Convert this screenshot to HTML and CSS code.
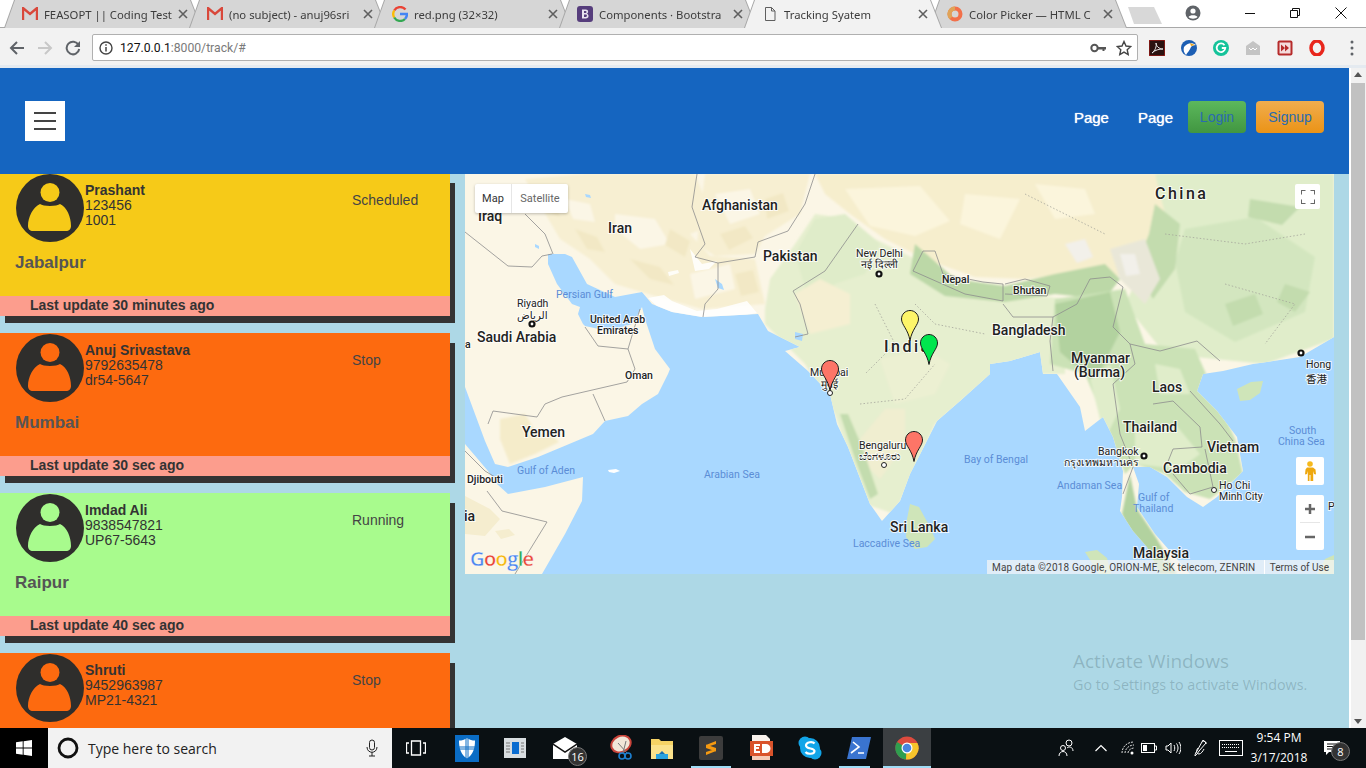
FILE: index.html
```html
<!DOCTYPE html>
<html lang="en">
<head>
    <meta charset="UTF-8">
    <meta name="viewport" content="width=device-width, initial-scale=1.0">
    <title>Tracking Syatem</title>
    <link rel="stylesheet" href="styles.css">
</head>
<body>
    <svg class="defs" width="0" height="0">
        <symbol id="person" viewBox="0 0 68 68">
            <circle cx="34" cy="34" r="34" fill="#2f2e2c"/>
            <circle cx="34" cy="18.5" r="9.5" class="cut"/>
            <path class="cut" d="M24 30c3 2.500 17 2.500 20 0 7 3 11 13 11 22 0 3-2 5-5 5H17c-3 0-5-2-5-5 0-9 5-19 12-22z"/>
        </symbol>
        <symbol id="pin" viewBox="0 0 18 31">
            <path stroke="#1c1c1c" stroke-width="1" d="M9 .5C4.300.5.500 4.300.500 9c0 6 6.500 10 8.500 21.500C11 19 17.500 15 17.500 9 17.500 4.300 13.700.500 9 .500z"/>
        </symbol>
        <symbol id="close" viewBox="0 0 10 10">
            <path d="M1 1l8 8M9 1l-8 8" stroke="#5f5f5f" stroke-width="1.600"/>
        </symbol>
        <symbol id="gmail" viewBox="0 0 16 14">
            <path d="M1 13V1l7 6 7-6v12" fill="none" stroke="#d9483b" stroke-width="2.400"/>
        </symbol>
    </svg>

    <!-- browser window -->
    <div class="tabstrip">
        <div class="tab">
            <svg class="fav" width="16" height="14"><use href="#gmail"/></svg>
            <span class="tab-title">FEASOPT || Coding Test</span>
            <svg class="tab-x" width="10" height="10"><use href="#close"/></svg>
        </div>
        <div class="tab">
            <svg class="fav" width="16" height="14"><use href="#gmail"/></svg>
            <span class="tab-title">(no subject) - anuj96sri</span>
            <svg class="tab-x" width="10" height="10"><use href="#close"/></svg>
        </div>
        <div class="tab">
            <svg class="fav" width="16" height="16" viewBox="0 0 16 16">
                <path d="M13.500 3.500A7 7 0 0 0 2.200 4.500" fill="none" stroke="#ea4335" stroke-width="2.400"/>
                <path d="M2.200 4.500a7 7 0 0 0 0 7" fill="none" stroke="#fbbc05" stroke-width="2.400"/>
                <path d="M2.200 11.500a7 7 0 0 0 10.800 1.500" fill="none" stroke="#34a853" stroke-width="2.400"/>
                <path d="M13 13a7 7 0 0 0 2-5H8" fill="none" stroke="#4285f4" stroke-width="2.400"/>
            </svg>
            <span class="tab-title">red.png (32×32)</span>
            <svg class="tab-x" width="10" height="10"><use href="#close"/></svg>
        </div>
        <div class="tab">
            <svg class="fav" width="16" height="16" viewBox="0 0 16 16">
                <rect width="16" height="16" rx="3" fill="#563d7c"/>
                <path d="M5 3.500h3.800c3 0 3 3.700.8 4.200 2.800.4 2.600 4.800-.8 4.800H5zM7 5.100v2h1.500c1.400 0 1.400-2 0-2zM7 8.600v2.300h1.800c1.600 0 1.600-2.300 0-2.300z" fill="#e9e4f0" fill-rule="evenodd"/>
            </svg>
            <span class="tab-title">Components · Bootstra</span>
            <svg class="tab-x" width="10" height="10"><use href="#close"/></svg>
        </div>
        <div class="tab tab-active">
            <svg class="fav" width="16" height="16" viewBox="0 0 16 16">
                <path d="M3.500 1.500h6l3.500 3.500v9.500h-9.500zM9.500 1.500v3.500H13" fill="none" stroke="#5f5f5f"/>
            </svg>
            <span class="tab-title">Tracking Syatem</span>
            <svg class="tab-x" width="10" height="10"><use href="#close"/></svg>
        </div>
        <div class="tab">
            <svg class="fav" width="16" height="16" viewBox="0 0 16 16">
                <circle cx="8" cy="8" r="5.500" fill="none" stroke="#f2704a" stroke-width="4"/>
                <path d="M8 2.500a5.500 5.500 0 0 0-4 9.300" fill="none" stroke="#e0a458" stroke-width="4"/>
            </svg>
            <span class="tab-title">Color Picker — HTML C</span>
            <svg class="tab-x" width="10" height="10"><use href="#close"/></svg>
        </div>
        <div class="newtab"></div>
        <div class="winbtns">
            <svg width="16" height="16" viewBox="0 0 16 16" class="profile">
                <circle cx="8" cy="8" r="7.500" fill="#5f6368"/>
                <circle cx="8" cy="6" r="2.600" fill="#fff"/>
                <path d="M3.500 12c1-2.300 8-2.300 9 0-2 2.300-7 2.300-9 0z" fill="#fff"/>
            </svg>
            <svg width="12" height="12" viewBox="0 0 12 12" class="minimize"><path d="M1 6.500h10" stroke="#111"/></svg>
            <svg width="12" height="12" viewBox="0 0 12 12" class="restore"><path d="M1.500 3.500h7v7h-7zM3.500 3.500v-2h7v7h-2" fill="none" stroke="#111"/></svg>
            <svg width="14" height="14" viewBox="0 0 14 14" class="winclose"><path d="M1.500 1.500l11 11M12.500 1.500l-11 11" stroke="#111"/></svg>
        </div>
    </div>

    <div class="toolbar">
        <svg class="tool-back" width="16" height="16" viewBox="0 0 16 16"><path d="M15 8H2.500M8 2L2 8l6 6" fill="none" stroke="#5f6368" stroke-width="2"/></svg>
        <svg class="tool-fwd" width="16" height="16" viewBox="0 0 16 16"><path d="M1 8h12.500M8 2l6 6-6 6" fill="none" stroke="#c8c8c8" stroke-width="2"/></svg>
        <svg class="tool-reload" width="16" height="16" viewBox="0 0 16 16"><path d="M13.500 5A6.300 6.300 0 1 0 14.200 9" fill="none" stroke="#5f6368" stroke-width="2"/><path d="M15 1v6H9z" fill="#5f6368"/></svg>
        <div class="omnibox">
            <svg width="14" height="14" viewBox="0 0 14 14"><circle cx="7" cy="7" r="6" fill="none" stroke="#444" stroke-width="1.400"/><path d="M7 6v4.500M7 3.200v1.500" stroke="#444" stroke-width="1.500"/></svg>
            <span class="url"><b>127.0.0.1</b>:8000/track/#</span>
            <svg class="omni-key" width="16" height="10" viewBox="0 0 16 10"><circle cx="4.500" cy="5" r="3.200" fill="none" stroke="#555" stroke-width="2"/><path d="M7 4h9v2.500h-1.500V8h-2V6.500H7z" fill="#555"/></svg>
            <svg class="omni-star" width="16" height="16" viewBox="0 0 16 16"><path d="M8 1.500l2 4.500 4.800.500-3.600 3.200 1 4.800L8 12.100l-4.200 2.400 1-4.800L1.200 6.500 6 6z" fill="none" stroke="#444" stroke-width="1.400"/></svg>
        </div>
        <div class="exts">
            <svg width="16" height="16" viewBox="0 0 16 16"><rect width="16" height="16" fill="#2a1210" stroke="#c8201a"/><path d="M3 13c3-2 5-7 4-10 0 3 3 6 7 6-4 0-8 1-11 4z" fill="none" stroke="#e8e8e8"/></svg>
            <svg width="16" height="16" viewBox="0 0 16 16"><circle cx="8" cy="8" r="8" fill="#1d5fb4"/><path d="M3 7c3-4 8-5 12-2-3 0-4 1-5 2-1 3-4 6-5 8-2-2-3-5-2-8z" fill="#fff"/><path d="M9 3l5 2-4 1z" fill="#e8a21c"/></svg>
            <svg width="16" height="16" viewBox="0 0 16 16"><circle cx="8" cy="8" r="8" fill="#15c39a"/><path d="M11.500 5.200A4.300 4.300 0 1 0 12.300 8H8.800" fill="none" stroke="#fff" stroke-width="1.800"/></svg>
            <svg width="16" height="16" viewBox="0 0 16 16"><path d="M1 6l7-5 7 5v9H1z" fill="#c4c4c4"/><path d="M4 8l2 2 2-2 2 2 2-2" fill="none" stroke="#fff"/></svg>
            <svg width="16" height="16" viewBox="0 0 16 16"><rect x=".5" y=".5" width="15" height="15" rx="2" fill="#b62b2b"/><rect x="2.500" y="2.500" width="11" height="11" fill="#f4dcdc"/><path d="M4 4.500l4 3.500-4 3.500zM8 4.500l4 3.500-4 3.500z" fill="#b62b2b"/></svg>
            <svg width="16" height="16" viewBox="0 0 16 16"><ellipse cx="8" cy="8" rx="6" ry="7" fill="none" stroke="#e8261c" stroke-width="3.500"/></svg>
            <svg class="menu-dots" width="4" height="16" viewBox="0 0 4 16"><circle cx="2" cy="2" r="1.500" fill="#5f6368"/><circle cx="2" cy="8" r="1.500" fill="#5f6368"/><circle cx="2" cy="14" r="1.500" fill="#5f6368"/></svg>
        </div>
    </div>

    <!-- the page itself -->
    <div class="viewport">
        <div class="page">
            <nav class="navbar">
                <button class="burger"><span></span><span></span><span></span></button>
                <div class="nav-right">
                    <a class="nav-link" href="#">Page</a>
                    <a class="nav-link" href="#">Page</a>
                    <a class="btn btn-login" href="#">Login</a>
                    <a class="btn btn-signup" href="#">Signup</a>
                </div>
            </nav>

            <div class="main">
                <div class="sidebar">
                    <div class="card card-yellow">
                        <div class="card-body">
                            <svg class="avatar" width="68" height="68"><use href="#person"/></svg>
                            <div class="info"><b>Prashant</b><br>123456<br>1001</div>
                            <div class="status">Scheduled</div>
                            <div class="city">Jabalpur</div>
                        </div>
                        <div class="card-foot">Last update 30 minutes ago</div>
                    </div>
                    <div class="card card-orange">
                        <div class="card-body">
                            <svg class="avatar" width="68" height="68"><use href="#person"/></svg>
                            <div class="info"><b>Anuj Srivastava</b><br>9792635478<br>dr54-5647</div>
                            <div class="status">Stop</div>
                            <div class="city">Mumbai</div>
                        </div>
                        <div class="card-foot">Last update 30 sec ago</div>
                    </div>
                    <div class="card card-green">
                        <div class="card-body">
                            <svg class="avatar" width="68" height="68"><use href="#person"/></svg>
                            <div class="info"><b>Imdad Ali</b><br>9838547821<br>UP67-5643</div>
                            <div class="status">Running</div>
                            <div class="city">Raipur</div>
                        </div>
                        <div class="card-foot">Last update 40 sec ago</div>
                    </div>
                    <div class="card card-orange">
                        <div class="card-body">
                            <svg class="avatar" width="68" height="68"><use href="#person"/></svg>
                            <div class="info"><b>Shruti</b><br>9452963987<br>MP21-4321</div>
                            <div class="status">Stop</div>
                        </div>
                    </div>
                </div>

                <div class="map">
                    <svg class="map-svg" width="869" height="400" viewBox="0 0 869 400">
                        <defs>
                            <clipPath id="land"><path id="landshape" d="M869 163L835 183 788 190 758 197 738 200 732 217 752 237 772 263 778 297 752 323 738 333 722 323 702 303 685 293 668 293 674 310 672 333 690 360 712 385 725 400 695 400 682 373 668 357 655 337 657 323 658 297 648 263 638 243 620 257 615 233 592 200 578 200 575 178 545 187 525 190 525 200 495 227 472 247 445 300 435 327 417 347 405 330 383 273 372 250 365 220 343 197 320 177 335 173 303 157 293 140 237 143 207 138 187 130 177 118 150 123 122 110 107 83 100 80 83 80 83 90 92 110 107 130 115 133 113 140 118 150 120 152 143 157 167 150 177 133 180 145 190 175 205 195 203 200 193 220 177 230 163 242 140 247 128 260 97 273 73 283 43 293 30 290 20 267 0 213 0 0 869 0z"/></clipPath>
                            <filter id="soft"><feGaussianBlur stdDeviation=".8"/></filter>
                        </defs>
                        <rect width="869" height="400" fill="#a9d8ff"/>
                        <!-- horn of africa, islands -->
                        <path fill="#fbf6e6" d="M0 270L23 297 32 310 43 320 80 313 118 303 117 327 100 360 77 400 0 400z"/>
                        <path fill="#f5edcf" d="M0 322L25 335 35 345 20 362 0 360z"/>
                        <path fill="#f5edcf" d="M30 357l14-2 6 6-14 4z"/>
                        <path fill="#fff" d="M143 296l8-1 4 2-6 2-5-1z"/>
                        <path fill="#cfe5b9" d="M445 330l9 3 11 20 5 12-8 8-12 2-9-12 1-18z"/>
                        <path fill="#cfe5b9" d="M772 215l14-7 12-1-3 12-10 7-10 1z"/>
                        <path fill="#cfe5b9" d="M620 378l12-2 10 8 4 16h-12zM852 400l8-15 9-4v19z"/>

                        <g clip-path="url(#land)">
                            <rect width="869" height="400" fill="#fbf6e6"/>
                            <g filter="url(#soft)">
                                <path fill="#f7efd2" d="M60 5L120 0 230 0 250 50 225 60 245 82 290 85 300 130 237 135 190 122 150 110 125 85 95 65z"/>
                                <path fill="#f7efd2" d="M240 0L345 0 335 40 300 62 290 80 250 82 232 70 235 40z"/>
                                <path fill="#fbf6e6" d="M150 40l40 5 15 25-30 5-25-20zM250 20l35-5 10 25-30 10zM225 100l40-10 5 25-40 10zM100 25l25 5 5 18-22-3z"/>
                                <path fill="#f2e8c5" d="M110 55l22 8 8 15-18-3zM165 85l30 8 14 18-24-6zM205 55l20 12-5 16-20-12zM255 60l25-8 8 12-24 12zM270 100l18-4 6 22-18 4zM300 25l18-6 6 18-22 8zM75 20l15 5 5 18-14-6z"/>
                                <path fill="#e6efcf" d="M300 135L305 105 330 70 350 40 385 45 410 65 460 90 520 115 560 120 600 125 600 200 530 200 470 250 430 340 400 330 370 240 340 190 300 150z"/>
                                <path fill="#dfecc9" d="M330 80L350 45 380 40 415 70 400 100 370 110 345 130z"/>
                                <path fill="#f5efd2" d="M330 120L355 105 385 120 385 150 345 160z"/>
                                <path fill="#f0eed0" d="M395 265l25-30 20 0 0 35-25 35-10-10z"/>
                                <path fill="#c3dcae" d="M375 240l8 0 15 35 15 45-8 5-15-40z"/>
                                <path fill="#ecf0d2" d="M415 185l45-10 25 15-15 30-40 10z"/>
                                <path fill="#f6eecd" d="M350 0L690 0 700 35 680 90 640 108 600 100 560 105 510 103 460 85 420 65 385 40 360 20z"/>
                                <path fill="#fbf5dc" d="M380 15l75-3 30 35-35 15-45-10zM500 20l55 5-20 40-40-15zM570 10l50 5 10 25-40 5z"/>
                                <path fill="#e0edca" d="M690 0L869 0 869 165 800 190 700 180 660 130 680 90 700 40z"/>
                                <path fill="#d3e6bf" d="M720 55l70-12 60 40-10 55-70 30-50-30-10-50z"/>
                                <path fill="#c3dcae" d="M690 30l25 20-5 45-22 30-18-30 14-35zM785 25l50 8-18 18-34-8zM760 130l30-10 8 20-30 12zM820 110l25 8-15 20-18-10z"/>
                                <path fill="#e9e7d8" d="M645 75l35-10 15 40-15 25-25-25z"/>
                                <path fill="#f2f0ea" d="M600 70l20-5 8 18-16 6zM655 80l15 0 5 20-14 2z"/>
                                <path fill="#bcd8a7" d="M450 70L490 105 540 112 590 100 640 90 655 105 640 125 590 120 540 128 480 122 445 100z"/>
                                <path fill="#cbe2b6" d="M590 125L660 115 680 170 730 175 770 265 778 300 745 325 720 318 700 300 670 290 660 300 645 260 620 200 585 190z"/>
                                <path fill="#b2d29f" d="M590 130l55-12 10 40-25 50-35-30z"/>
                                <path fill="#e0edca" d="M625 205l20-15 10 45-15 30zM670 255l40-5 25 30-20 15-45-5zM690 190l25 5 10 25-30 0z"/>
                                <path fill="#b2d29f" d="M665 300l7 35 20 30 20 35-30 0-25-60z"/>
                                <path fill="#f5ecca" d="M35 245l25-5 12 20 14 0 8 8-24 12-25 10-10-25z"/>
                            </g>
                            <path fill="#fff" opacity=".85" d="M183 124l16-3 8 6 25 10 20-2 30-8 10 12-30 6-35 0-30-8zM225 75l12 15 15-3-8 8-14 2zM203 98l10-2 1 3-10 3z"/>
                            <path fill="#a9d8ff" d="M250 105l7 5 2 6-6-2zM330 158l8 2-1 7-7-2zM120 20l5 1 1 3-5-1zM70 70l4 2 0 3-4-2z"/>
                        </g>

                        <g class="borders" fill="none">
                            <path d="M0 58L43 92 67 93 77 82 87 80M60 40L80 60 88 80"/>
                            <path d="M232 0L227 33 240 70 230 83 253 89 253 115 240 130 238 143"/>
                            <path d="M253 89L290 83 293 68 323 57 340 30 350 0"/>
                            <path d="M393 50L360 97 328 117 335 130 343 160 330 163"/>
                            <path d="M120 153L133 172 163 175 175 135M163 175L170 195 162 208 97 223 80 230 72 243 28 237 23 250M128 220L140 247"/>
                            <path d="M22 317L37 337 82 348 50 400M0 277L20 297 30 303"/>
                            <path d="M448 97L458 77 470 77 478 100 518 108 538 110 538 127 500 120 448 97"/>
                            <path d="M540 120L582 122 585 112 560 105 540 110"/>
                            <path d="M538 130L548 143 588 143 585 167 588 197M588 143L612 130 625 105 645 103 658 113 648 153 665 170 695 177 732 167 755 187"/>
                            <path d="M665 170L670 190 648 210 655 260 668 293 658 320"/>
                            <path d="M688 230L708 227 735 253 737 273 708 275 702 290M725 217L755 250 768 267M708 300L725 320 748 313 740 275"/>
                            <path class="dash" d="M450 130L470 150 520 160M395 230L440 225 470 190M410 130L430 170 400 200M700 60L780 70 840 60M760 110L830 130 800 170M560 20L640 60"/>
                        </g>

                        <g class="lbl-sea">
                            <text x="91" y="124">Persian Gulf</text>
                            <text x="52" y="300">Gulf of Aden</text>
                            <text x="239" y="304">Arabian Sea</text>
                            <text x="499" y="289">Bay of Bengal</text>
                            <text x="388" y="373">Laccadive Sea</text>
                            <text x="592" y="315">Andaman Sea</text>
                            <text x="673" y="327">Gulf of</text>
                            <text x="668" y="338">Thailand</text>
                            <text x="824" y="260">South</text>
                            <text x="813" y="271">China Sea</text>
                        </g>
                        <g class="lbl-big">
                            <text x="13" y="47">Iraq</text>
                            <text x="143" y="59">Iran</text>
                            <text x="237" y="36">Afghanistan</text>
                            <text x="298" y="87">Pakistan</text>
                            <text x="12" y="168">Saudi Arabia</text>
                            <text x="57" y="263">Yemen</text>
                            <text x="-1" y="347">ia</text>
                            <text x="425" y="358">Sri Lanka</text>
                            <text x="527" y="161">Bangladesh</text>
                            <text x="606" y="189">Myanmar</text>
                            <text x="609" y="203">(Burma)</text>
                            <text x="687" y="218">Laos</text>
                            <text x="658" y="258">Thailand</text>
                            <text x="742" y="278">Vietnam</text>
                            <text x="698" y="299">Cambodia</text>
                            <text x="668" y="384">Malaysia</text>
                        </g>
                        <text class="lbl-wide" x="419" y="178">India</text>
                        <text class="lbl-wide" x="690" y="25">China</text>
                        <g class="lbl-mid">
                            <text x="125" y="149">United Arab</text>
                            <text x="132" y="160">Emirates</text>
                            <text x="160" y="205">Oman</text>
                            <text x="2" y="309">Djibouti</text>
                            <text x="477" y="109">Nepal</text>
                            <text x="548" y="120">Bhutan</text>
                            <text x="0" y="174">a</text>
                        </g>
                        <g class="lbl-city">
                            <text x="391" y="83">New Delhi</text>
                            <text x="396" y="94">नई दिल्ली</text>
                            <text x="52" y="133">Riyadh</text>
                            <text x="52" y="145">الرياض</text>
                            <text x="345" y="202">Mumbai</text>
                            <text x="356" y="214">मुंबई</text>
                            <text x="394" y="275">Bengaluru</text>
                            <text x="394" y="286">ಬೆಂಗಳೂರು</text>
                            <text x="633" y="281">Bangkok</text>
                            <text x="599" y="292">กรุงเทพมหานคร</text>
                            <text x="754" y="315">Ho Chi</text>
                            <text x="754" y="326">Minh City</text>
                            <text x="841" y="194">Hong</text>
                            <text x="841" y="209">香港</text>
                            <text x="863" y="336">P</text>
                        </g>
                        <g class="dots">
                            <circle cx="414" cy="100" r="2.500"/><circle cx="67" cy="150" r="2.500"/>
                            <circle cx="836" cy="179" r="2.500"/><circle cx="679" cy="282" r="2.500"/>
                        </g>
                        <g class="rings">
                            <circle cx="365" cy="219" r="2.500"/><circle cx="419" cy="291" r="2.500"/><circle cx="749" cy="316" r="2.500"/>
                        </g>

                        <use href="#pin" x="436" y="136" width="18" height="31" fill="#fdf569"/>
                        <use href="#pin" x="455" y="160" width="18" height="31" fill="#00e64d"/>
                        <use href="#pin" x="356" y="186" width="18" height="31" fill="#fd7567"/>
                        <use href="#pin" x="440" y="257" width="18" height="31" fill="#fd7567"/>
                    </svg>

                    <div class="map-type"><span class="map-on">Map</span><span class="map-off">Satellite</span></div>
                    <div class="map-ctl map-full">
                        <svg width="14" height="14" viewBox="0 0 14 14"><path d="M0 4.500V0h4.500M9.500 0H14v4.500M14 9.500V14H9.500M4.500 14H0V9.500" fill="none" stroke="#666" stroke-width="2"/></svg>
                    </div>
                    <div class="map-ctl map-peg">
                        <svg width="12" height="20" viewBox="0 0 12 20"><circle cx="6" cy="3" r="2.800" fill="#f6b91c"/><path d="M3 6.500h6l2.500 2 .5 5-2-.5-.8-3V20H6.500v-6h-1v6H3.800V10l-.8 3-2 .5.500-5z" fill="#eea80f"/></svg>
                    </div>
                    <div class="map-zoom">
                        <div class="zoom-btn"><svg width="12" height="12" viewBox="0 0 12 12"><path d="M6 1v10M1 6h10" stroke="#666" stroke-width="2.500"/></svg></div>
                        <div class="zoom-sep"></div>
                        <div class="zoom-btn"><svg width="12" height="12" viewBox="0 0 12 12"><path d="M1 6h10" stroke="#666" stroke-width="2.500"/></svg></div>
                    </div>
                    <div class="google"><span class="g-b">G</span><span class="g-r">o</span><span class="g-y">o</span><span class="g-b">g</span><span class="g-g">l</span><span class="g-r">e</span></div>
                    <div class="attrib"><span class="attrib-text">Map data ©2018 Google, ORION-ME, SK telecom, ZENRIN</span><span class="terms">Terms of Use</span></div>
                </div>
            </div>
            <div class="activate">
                <div class="act-a">Activate Windows</div>
                <div class="act-b">Go to Settings to activate Windows.</div>
            </div>
        </div>
        <div class="scrollbar">
            <span class="arrow-up"></span>
            <div class="thumb"></div>
            <span class="arrow-down"></span>
        </div>
    </div>

    <!-- windows taskbar -->
    <div class="taskbar">
        <div class="start">
            <svg width="16" height="16" viewBox="0 0 16 16"><path d="M0 2.300l6.700-1v6.300H0zM7.600 1.200L16 0v7.600H7.600zM0 8.400h6.700v6.300L0 13.700zM7.600 8.400H16V16l-8.400-1.200z" fill="#fff"/></svg>
        </div>
        <div class="search">
            <svg width="22" height="22" viewBox="0 0 22 22"><circle cx="11" cy="11" r="9" fill="none" stroke="#111" stroke-width="2.800"/></svg>
            <span class="search-text">Type here to search</span>
            <svg class="mic" width="12" height="18" viewBox="0 0 12 18"><rect x="3.500" y="1" width="5" height="10" rx="2.500" fill="none" stroke="#222"/><path d="M1 8c0 7 10 7 10 0M6 13v4M3 17h6" fill="none" stroke="#222"/></svg>
        </div>
        <div class="taskview">
            <svg width="20" height="16" viewBox="0 0 20 16"><path d="M5.500 1h9v14h-9zM3 3H.500v10H3M17 3h2.500v10H17" fill="none" stroke="#fff" stroke-width="1.300"/></svg>
        </div>
        <div class="task-icons">
            <div class="slot">
                <svg width="24" height="27" viewBox="0 0 24 27"><rect width="24" height="27" fill="#0a6cc4"/><path d="M12 3c3 2 5 2.500 8 2.500 0 8-2 14-8 18-6-4-8-10-8-18 3 0 5-.5 8-2.500z" fill="#fff"/><path d="M11 3v21M13 3v21M4 12h16M4 14h16" stroke="#0a6cc4"/></svg>
            </div>
            <div class="slot">
                <svg width="22" height="20" viewBox="0 0 22 20"><rect width="22" height="20" fill="#d8dde0"/><rect x="8" y="4" width="7" height="12" fill="#0a6cd0"/><path d="M2 5h4M2 8h4M2 11h4M2 14h4M17 5h3M17 8h3M17 11h3M17 14h3" stroke="#777"/></svg>
            </div>
            <div class="slot slot-mail">
                <svg width="24" height="22" viewBox="0 0 24 22"><path d="M0 7L12 0l12 7v15H0z" fill="#fff"/><path d="M0 7l12 8 12-8" fill="none" stroke="#111" stroke-width="1.500"/></svg>
                <span class="bubble">16</span>
            </div>
            <div class="slot slot-snip">
                <svg width="24" height="26" viewBox="0 0 24 26"><ellipse cx="11" cy="9" rx="10" ry="8" fill="#f1e6d8" stroke="#c9443a" stroke-width="2" transform="rotate(-25 11 9)"/><path d="M8 8l9 10M16 6l-3 12" stroke="#777"/><circle cx="18" cy="21" r="3" fill="none" stroke="#1c7fd0" stroke-width="1.600"/><circle cx="12" cy="21" r="3" fill="none" stroke="#1c7fd0" stroke-width="1.600"/></svg>
            </div>
            <div class="slot slot-folder">
                <svg width="22" height="22" viewBox="0 0 22 22"><path d="M0 2h8l2 2h12v18H0z" fill="#f6d365"/><path d="M0 8h22v14H0z" fill="#fbe28c"/><path d="M5 17h12v5H5z" fill="#2aa3e0"/><path d="M8 17l3-3 3 3z" fill="#1a6fb0"/></svg>
            </div>
            <div class="slot slot-on slot-subl">
                <svg width="24" height="24" viewBox="0 0 24 24"><rect width="24" height="24" rx="2" fill="#3c3c3c"/><path d="M17 5L7 9v3l10 3.500V12L11 10l6-2zM7 19l10-4v-3L7 8.500V12l6 2-6 2z" fill="#f59a11"/></svg>
            </div>
            <div class="slot slot-ppt">
                <svg width="24" height="26" viewBox="0 0 24 26"><path d="M2 0h14l4 4v8H2z" fill="#f7f1ec"/><rect x="0" y="6" width="23" height="15" fill="#d9532b"/><path d="M4 9h6v2H6v1h3v2H6v2h4v2H4zM12 9h4a4 4 0 0 1 0 9h-4z" fill="#fff"/><path d="M2 21h18v4H2z" fill="#f5c9b5"/></svg>
            </div>
            <div class="slot">
                <svg width="24" height="24" viewBox="0 0 24 24"><circle cx="7" cy="7" r="6.500" fill="#12a5e8"/><circle cx="17" cy="17" r="6.500" fill="#12a5e8"/><circle cx="12" cy="12" r="10" fill="#12a5e8"/><path d="M16.500 7.500C15 5.500 8 5.500 8 9.500c0 4 8.500 2 8.500 5.500 0 3.500-7 3.500-9 1" fill="none" stroke="#fff" stroke-width="2.200"/></svg>
            </div>
            <div class="slot slot-on slot-ps">
                <svg width="24" height="22" viewBox="0 0 24 22"><path d="M5 0h19l-5 22H0z" fill="#3a74d0"/><path d="M6 5l6 5-8 6M11 16h6" fill="none" stroke="#fff" stroke-width="1.600"/></svg>
            </div>
            <div class="slot slot-chrome">
                <svg width="24" height="24" viewBox="0 0 24 24"><circle cx="12" cy="12" r="11.500" fill="#dd4b3e"/><path d="M12 12L2 6a11.500 11.500 0 0 0 9 17.500z" fill="#2f9e4f"/><path d="M12 7h10.400a11.500 11.500 0 0 1-11.400 16.500z" fill="#f7c52b"/><circle cx="12" cy="12" r="5.500" fill="#fff"/><circle cx="12" cy="12" r="4.300" fill="#4a86e0"/></svg>
            </div>
        </div>
        <div class="tray">
            <svg class="tray-people" width="16" height="18" viewBox="0 0 16 18"><circle cx="11" cy="4" r="3" fill="none" stroke="#fff"/><circle cx="5" cy="9" r="2.500" fill="none" stroke="#fff"/><path d="M1 17c0-6 8-6 8 0M9 9c2-2 6-1 6 3" fill="none" stroke="#fff"/></svg>
            <svg class="tray-caret" width="12" height="8" viewBox="0 0 12 8"><path d="M.5 7L6 1.500 11.500 7" fill="none" stroke="#fff" stroke-width="1.200"/></svg>
            <svg class="tray-wifi" width="14" height="14" viewBox="0 0 14 14"><path d="M1 12C1 6 6 1 13 1M4 12c0-4 4-8 9-8M7 12c0-2.500 3-5 6-5" fill="none" stroke="#ddd" stroke-dasharray="2 1"/><circle cx="11" cy="12" r="1.500" fill="#fff"/></svg>
            <svg class="tray-batt" width="16" height="10" viewBox="0 0 16 10"><rect x=".5" y=".5" width="13" height="9" fill="none" stroke="#fff"/><rect x="2" y="2" width="4" height="6" fill="#fff"/><path d="M14 3h1.500v4H14" stroke="#fff" fill="none"/></svg>
            <svg class="tray-vol" width="16" height="14" viewBox="0 0 16 14"><path d="M1 5h2l3-3v10L3 9H1z" fill="none" stroke="#fff"/><path d="M9 4c1 2 1 4 0 6M11.500 2.500c2 3 2 6 0 9M14 1c2.500 4 2.500 8 0 12" fill="none" stroke="#fff"/></svg>
            <svg class="tray-pen" width="14" height="18" viewBox="0 0 14 18"><path d="M9 1l3 3-7 8c-1 2-3 4-4 5 0-2 1-4 2-5zM8 3c2-2 5 0 4 2M4 9c-2 2-2 6 1 6 2 0 4-3 5-5" fill="none" stroke="#fff"/></svg>
            <svg class="tray-kbd" width="24" height="16" viewBox="0 0 24 16"><rect x=".5" y=".5" width="23" height="15" fill="none" stroke="#fff"/><path d="M3 4.500h18M3 7.500h18" stroke="#fff" stroke-dasharray="1 1"/><path d="M6 11.500h12" stroke="#fff"/></svg>
            <div class="clock"><div>9:54 PM</div><div>3/17/2018</div></div>
            <div class="notif">
                <svg width="16" height="14" viewBox="0 0 16 14"><path d="M0 0h16v11H5l-3 3v-3H0z" fill="#fff"/><path d="M3 3h10M3 5.500h10M3 8h7" stroke="#111"/></svg>
                <span class="bubble bubble-n">8</span>
            </div>
        </div>
    </div>
</body>
</html>
```

FILE: styles.css
```css
* {
    box-sizing: border-box;
}
html, body {
    margin: 0;
    height: 768px;
    overflow: hidden;
}
body {
    display: flex;
    flex-direction: column;
    font-family: "Liberation Sans", Arial, sans-serif;
    font-size: 14px;
    background: #add8e6;
}
.defs {
    position: absolute;
}
.cut {
    fill: var(--card);
}

/* chrome */
.tabstrip {
    display: flex;
    height: 28px;
    padding-left: 5px;
    background: #fff;
    font-family: "Noto Sans", sans-serif;
    font-size: 11.3px;
    color: #3c3c3c;
    flex-shrink: 0;
    box-shadow: inset 0 -1px 0 #a8a8a8;
}
.tab {
    position: relative;
    display: flex;
    align-items: center;
    width: 196px;
    height: 28px;
    margin-right: -11px;
    padding: 0 13px 0 17px;
    filter: drop-shadow(1px 0 0 #a6a6a6) drop-shadow(-1px 0 0 #a6a6a6);
}
.tab::before {
    content: "";
    position: absolute;
    inset: 0;
    background: #d6d6d6;
    clip-path: polygon(0 100%, 10px 0, 185px 0, 100% 100%);
}
.tab > * {
    position: relative;
}
.tab-active {
    z-index: 2;
}
.tab-active::before {
    background: #f2f2f2;
}
.fav {
    flex-shrink: 0;
    margin-right: 6px;
}
.tab-title {
    flex: 1;
    overflow: hidden;
    white-space: nowrap;
    margin-right: 6px;
}
.tab-x {
    flex-shrink: 0;
}
.newtab {
    width: 34px;
    height: 17px;
    margin: 7px 0 0 13px;
    background: #d8d8d8;
    clip-path: polygon(0 0, 26px 0, 100% 100%, 6px 100%);
}
.winbtns {
    display: flex;
    align-items: center;
    margin-left: auto;
    height: 26px;
}
.profile {
    margin-right: 43px;
}
.minimize {
    margin-right: 33px;
}
.restore {
    margin-right: 33px;
}
.winclose {
    margin-right: 18px;
}

.toolbar {
    display: flex;
    align-items: center;
    height: 40px;
    padding: 2px 0 0 9px;
    background: #f2f2f2;
    border-bottom: 3px solid #e4eaf0;
    flex-shrink: 0;
}
.tool-fwd {
    margin-left: 12px;
}
.tool-reload {
    margin-left: 12px;
}
.omnibox {
    display: flex;
    align-items: center;
    width: 1046px;
    height: 27px;
    margin-left: 11px;
    padding: 0 5px 0 6px;
    background: #fff;
    border: 1px solid #b0b0b0;
    border-radius: 2px;
}
.url {
    margin-left: 7px;
    font-family: Roboto, sans-serif;
    font-size: 12.2px;
    color: #7a7a7a;
}
.url b {
    font-weight: 400;
    color: #111;
}
.omni-key {
    margin-left: auto;
}
.omni-star {
    margin-left: 10px;
}
.exts {
    display: flex;
    align-items: center;
    gap: 16px;
    margin-left: 11px;
}
.menu-dots {
    margin-left: 9px;
}

/* page */
.viewport {
    display: flex;
    flex: 1;
    min-height: 0;
}
.page {
    position: relative;
    width: 1349px;
    overflow: hidden;
    background: #add8e6;
}
.navbar {
    position: relative;
    z-index: 2;
    display: flex;
    align-items: flex-start;
    height: 106px;
    padding: 33px 25px 0 25px;
    background: #1565c0;
}
.burger {
    display: flex;
    flex-direction: column;
    justify-content: center;
    align-items: center;
    gap: 6px;
    width: 40px;
    height: 40px;
    padding: 0;
    border: 0;
    background: #fff;
}
.burger span {
    display: block;
    width: 22px;
    height: 2px;
    background: #444;
}
.nav-right {
    display: flex;
    align-items: center;
    margin-left: auto;
}
.nav-link {
    margin-right: 29px;
    font-size: 15px;
    color: #fff;
    text-shadow: 0 0 1px #fff;
    text-decoration: none;
}
.nav-link + .btn {
    margin-left: -14px;
}
.btn {
    display: block;
    height: 32px;
    line-height: 32px;
    border-radius: 4px;
    font-size: 14px;
    text-align: center;
    color: #2a6bb0;
    text-decoration: none;
}
.btn-login {
    width: 58px;
    background: linear-gradient(#5cb85c, #419641);
    margin-right: 10px;
}
.btn-signup {
    width: 68px;
    background: linear-gradient(#f0ad4e, #eb9316);
}
.main {
    display: flex;
    align-items: flex-start;
    gap: 15px;
}
.sidebar {
    width: 450px;
    flex-shrink: 0;
    margin-top: -1px;
    display: flex;
    flex-direction: column;
    gap: 17px;
}
.card {
    position: relative;
    height: 143px;
    display: flex;
    flex-direction: column;
    z-index: 0;
    color: #333;
}
.card::before {
    content: "";
    position: absolute;
    z-index: -1;
    left: 5px;
    right: -5px;
    top: 10px;
    bottom: -7px;
    background: #333;
}
.card-yellow {
    --card: #f6ca18;
}
.card-orange {
    --card: #fd6a0f;
}
.card-green {
    --card: #a8fb8d;
}
.card-body {
    position: relative;
    height: 123px;
    flex-shrink: 0;
    display: grid;
    grid-template-columns: 69px 267px 1fr;
    grid-template-rows: 68px auto;
    padding: 1px 0 0 16px;
    background: var(--card);
}
.avatar {
    display: block;
}
.info {
    padding-top: 9px;
    line-height: 15px;
    font-size: 14px;
}
.status {
    padding-top: 18px;
    color: #444;
}
.city {
    grid-column: 1 / 3;
    margin: 11px 0 0 -1px;
    font-size: 17px;
    font-weight: 700;
    color: #555;
}
.card-foot {
    height: 20px;
    padding-left: 30px;
    line-height: 18px;
    font-weight: 700;
    color: #333;
    background: #fc9d8d;
}

/* map */
.map {
    position: relative;
    width: 869px;
    height: 400px;
    overflow: hidden;
    font-family: Roboto, sans-serif;
}
.map-svg {
    display: block;
}
.borders path {
    stroke: #8d8d8d;
    stroke-width: .8;
}
.borders .dash {
    stroke-dasharray: 1.500 2;
    stroke: #a5a59a;
}
.map-svg text {
    font-family: Roboto, "Noto Sans CJK SC", "DejaVu Sans", sans-serif;
    paint-order: stroke;
    stroke: #fff;
    stroke-opacity: .8;
    stroke-width: 2px;
}
.lbl-sea text {
    font-size: 10.500px;
    fill: #5b8dd6;
    stroke: none;
}
.lbl-big text {
    font-size: 14px;
    font-weight: 500;
    fill: #222;
}
.lbl-wide {
    font-size: 16px;
    font-weight: 500;
    letter-spacing: 2.500px;
    fill: #222;
}
.lbl-mid text {
    font-size: 10.500px;
    font-weight: 500;
    fill: #222;
}
.lbl-city text {
    font-size: 10.500px;
    fill: #222;
}
.dots circle {
    fill: #fff;
    stroke: #111;
    stroke-width: 2.200;
}
.rings circle {
    fill: #fff;
    stroke: #222;
    stroke-width: 1;
}
.map-type {
    position: absolute;
    left: 10px;
    top: 10px;
    display: flex;
    height: 29px;
    border-radius: 2px;
    background: #fff;
    box-shadow: 0 1px 3px rgba(0, 0, 0, .25);
    font-size: 11px;
    line-height: 29px;
}
.map-on {
    width: 37px;
    text-align: center;
    color: #333;
    border-right: 1px solid #e6e6e6;
}
.map-off {
    width: 56px;
    text-align: center;
    color: #666;
}
.map-ctl {
    position: absolute;
    display: flex;
    align-items: center;
    justify-content: center;
    background: #fff;
    border-radius: 2px;
}
.map-full {
    left: 830px;
    top: 10px;
    width: 25px;
    height: 25px;
}
.map-peg {
    left: 831px;
    top: 283px;
    width: 28px;
    height: 28px;
}
.map-zoom {
    position: absolute;
    left: 831px;
    top: 321px;
    width: 28px;
    height: 55px;
    display: flex;
    flex-direction: column;
    align-items: center;
    background: #fff;
    border-radius: 2px;
}
.zoom-btn {
    display: flex;
    align-items: center;
    justify-content: center;
    height: 27px;
}
.zoom-sep {
    width: 20px;
    height: 1px;
    background: #e6e6e6;
}
.google {
    position: absolute;
    left: 5px;
    bottom: 2px;
    font-family: "Open Sans", sans-serif;
    font-size: 20px;
    font-weight: 600;
    letter-spacing: -.6px;
    -webkit-text-stroke: .3px #fff;
}
.g-b { color: #4a85ee; }
.g-r { color: #e94335; }
.g-y { color: #f6b60c; }
.g-g { color: #2ea84f; }
.attrib {
    position: absolute;
    right: 0;
    bottom: 0;
    display: flex;
    width: 347px;
    height: 14px;
    padding-left: 5px;
    line-height: 15px;
    font-size: 10px;
    white-space: nowrap;
    color: #444;
    background: rgba(245, 245, 245, .72);
}
.attrib-text {
    letter-spacing: .17px;
}
.terms {
    margin-left: auto;
    padding: 0 5px;
    border-left: 1px solid #fff;
}
.activate {
    position: absolute;
    left: 1073px;
    top: 581px;
    font-family: "Open Sans", sans-serif;
    color: rgba(60, 90, 100, .28);
}
.act-a {
    font-size: 19px;
    line-height: 25px;
}
.act-b {
    margin-top: 1px;
    font-size: 14.300px;
    line-height: 20px;
    white-space: nowrap;
}

.scrollbar {
    position: relative;
    width: 17px;
    background: #f1f1f1;
    border-left: 2px solid #fff;
}
.thumb {
    position: absolute;
    left: 0;
    right: 1px;
    top: 15px;
    height: 557px;
    background: #c1c1c1;
}
.arrow-up, .arrow-down {
    position: absolute;
    left: 3px;
    width: 0;
    height: 0;
    border-left: 4px solid transparent;
    border-right: 4px solid transparent;
}
.arrow-up {
    top: 4px;
    border-bottom: 5px solid #555;
}
.arrow-down {
    bottom: 4px;
    border-top: 5px solid #555;
}

/* taskbar */
.taskbar {
    display: flex;
    align-items: stretch;
    height: 40px;
    flex-shrink: 0;
    background: #0a1013;
}
.start {
    display: flex;
    align-items: center;
    justify-content: center;
    width: 48px;
    background: #000;
}
.search {
    display: flex;
    align-items: center;
    width: 344px;
    padding: 0 14px 0 9px;
    background: #f2f2f2;
    font-family: "Open Sans", sans-serif;
    font-size: 14px;
    color: #222;
}
.search-text {
    margin-left: 9px;
}
.mic {
    margin-left: auto;
}
.taskview {
    display: flex;
    align-items: center;
    justify-content: center;
    width: 48px;
}
.task-icons {
    display: flex;
    margin-left: 3px;
}
.slot {
    position: relative;
    display: flex;
    align-items: center;
    justify-content: center;
    width: 48px;
}
.slot-mail {
    margin-left: 2px;
}
.slot-snip {
    margin-left: 9px;
}
.slot-folder {
    margin-left: -8px;
}
.slot-on {
    margin-left: 1px;
}
.slot-on::after {
    content: "";
    position: absolute;
    left: 4px;
    right: 4px;
    bottom: 0;
    height: 2px;
    background: #9fdcf5;
}
.slot-ps::after {
    right: 13px;
}
.slot-ppt {
    margin-left: 3px;
}
.slot-chrome {
    background: rgba(255, 255, 255, .2);
    box-shadow: inset 0 -2px 0 #9fdcf5;
}
.bubble {
    position: absolute;
    left: 27px;
    top: 19px;
    width: 19px;
    height: 19px;
    border-radius: 50%;
    background: #333;
    border: 1px solid #777;
    color: #fff;
    font-family: "Open Sans", sans-serif;
    font-size: 11px;
    line-height: 17px;
    text-align: center;
}
.tray {
    position: relative;
    display: flex;
    align-items: center;
    flex: 1;
    padding-left: 127px;
    font-family: "Open Sans", sans-serif;
    color: #fff;
}
.tray-caret {
    margin-left: 21px;
}
.tray-wifi {
    margin-left: 14px;
}
.tray-batt {
    margin-left: 6px;
}
.tray-vol {
    margin-left: 8px;
}
.tray-pen {
    margin-left: 13px;
}
.tray-kbd {
    margin-left: 11px;
}
.clock {
    width: 72px;
    font-size: 12px;
    line-height: 20px;
    text-align: center;
    white-space: nowrap;
}
.notif {
    position: relative;
    display: flex;
    margin-left: 9px;
}
.bubble-n {
    left: 7px;
    top: 1px;
}
```
